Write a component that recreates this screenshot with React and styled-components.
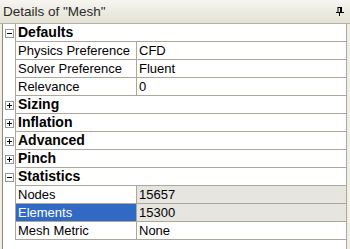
import React from "react";
import styled, { createGlobalStyle } from "styled-components";

const Global = createGlobalStyle`
  html, body {
    margin: 0;
    padding: 0;
    background: #f1efe4;
  }
  * { box-sizing: border-box; }
`;

const sections = [
  {
    name: "Defaults",
    open: true,
    rows: [
      { label: "Physics Preference", value: "CFD" },
      { label: "Solver Preference", value: "Fluent" },
      { label: "Relevance", value: "0" },
    ],
  },
  { name: "Sizing" },
  { name: "Inflation" },
  { name: "Advanced" },
  { name: "Pinch" },
  {
    name: "Statistics",
    open: true,
    rows: [
      { label: "Nodes", value: "15657", readOnly: true },
      { label: "Elements", value: "15300", readOnly: true, selected: true },
      { label: "Mesh Metric", value: "None" },
    ],
  },
];

function Pin() {
  return (
    <svg width="8" height="9" viewBox="0 0 8 9">
      <rect x="2" y="0.5" width="3" height="5" fill="none" stroke="#000" />
      <rect x="4" y="0" width="2" height="6" fill="#000" />
      <rect x="0" y="5" width="8" height="1" fill="#000" />
      <rect x="3" y="6" width="1" height="3" fill="#000" />
    </svg>
  );
}

function Toggle({ open }) {
  return (
    <ToggleBox>
      <svg width="9" height="9" viewBox="0 0 9 9">
        <rect x="0.5" y="0.5" width="8" height="8" fill="#fff" stroke="#919b9c" />
        <rect x="2" y="4" width="5" height="1" fill="#000" />
        {!open && <rect x="4" y="2" width="1" height="5" fill="#000" />}
      </svg>
    </ToggleBox>
  );
}

export default function App() {
  return (
    <>
      <Global />
      <Panel>
        <Header>
          <Title>Details of "Mesh"</Title>
          <Pin />
        </Header>
        <Grid>
          {sections.map((s) => (
            <React.Fragment key={s.name}>
              <Row>
                <Gutter>
                  <Toggle open={s.open} />
                </Gutter>
                <Category>{s.name}</Category>
              </Row>
              {s.open &&
                s.rows.map((r) => (
                  <Row key={r.label}>
                    <Gutter />
                    <Label $selected={r.selected}>{r.label}</Label>
                    <Value $readOnly={r.readOnly}>{r.value}</Value>
                  </Row>
                ))}
            </React.Fragment>
          ))}
        </Grid>
      </Panel>
    </>
  );
}

const Panel = styled.div`
  width: 350px;
  height: 249px;
  display: flex;
  flex-direction: column;
  font-family: "Liberation Sans", Arial, sans-serif;
  color: #000;
  overflow: hidden;
`;

const Header = styled.div`
  height: 24px;
  flex: none;
  display: flex;
  align-items: center;
  justify-content: space-between;
  padding: 0 6px 1px 3px;
  background: linear-gradient(#f6f5f0, #e4e2d4);
  border-bottom: 1px solid #b4b1a2;
`;

const Title = styled.span`
  font-size: 13.5px;
  color: #2a2a2a;
`;

const Grid = styled.div`
  flex: 1;
  width: 345px;
  margin-left: 2px;
  background: #fff;
  border-left: 1px solid #8c8a80;
  border-right: 1px solid #aca899;
`;

const Row = styled.div`
  display: flex;
  height: 18px;
`;

const Gutter = styled.div`
  width: 12px;
  flex: none;
  display: flex;
  align-items: center;
  justify-content: center;
  background: #fff;
`;

const ToggleBox = styled.span`
  display: flex;
  margin-left: 1px;
`;

const Category = styled.div`
  flex: 1;
  border-left: 1px solid #aca899;
  border-bottom: 1px solid #aca899;
  padding-left: 2px;
  font-weight: bold;
  font-size: 14px;
  line-height: 17px;
`;

const Label = styled.div`
  width: 122px;
  flex: none;
  border-left: 1px solid #aca899;
  border-right: 1px solid #aca899;
  border-bottom: 1px solid #aca899;
  padding-left: 2px;
  font-size: 13px;
  line-height: 17px;
  white-space: nowrap;
  background: ${(p) => (p.$selected ? "#316ac5" : "#fff")};
  color: ${(p) => (p.$selected ? "#fff" : "#000")};
`;

const Value = styled.div`
  flex: 1;
  border-bottom: 1px solid #aca899;
  padding-left: 2px;
  font-size: 13px;
  line-height: 17px;
  white-space: nowrap;
  background: ${(p) => (p.$readOnly ? "#e6e5e0" : "#fff")};
`;
